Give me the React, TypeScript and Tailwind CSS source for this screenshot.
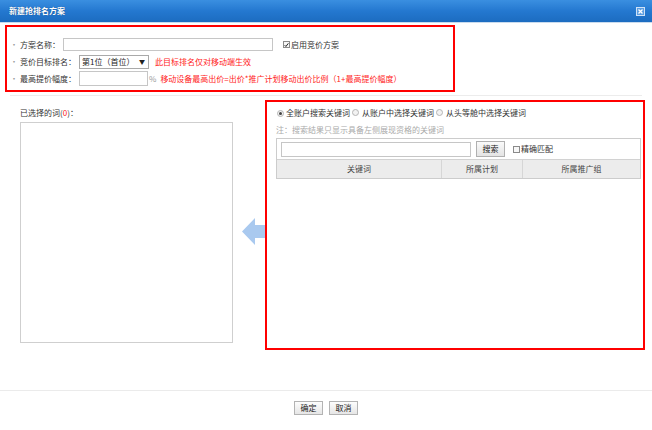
import React from 'react';

function Check({ checked }: { checked?: boolean }) {
  return (
    <span className="inline-flex h-[7px] w-[7px] shrink-0 items-center justify-center border border-[#8a8a8a] bg-[#f7f7f7]">
      {checked && (
        <svg width="6" height="6" viewBox="0 0 6 6">
          <path d="M0.8 3.2 L2.3 4.8 L5.2 1" stroke="#222" strokeWidth="1.2" fill="none" />
        </svg>
      )}
    </span>
  );
}

function Radio({ on }: { on?: boolean }) {
  return (
    <span className="inline-flex h-[7px] w-[7px] shrink-0 items-center justify-center rounded-full border border-[#b5b5b5] bg-[#f2f2f2]">
      {on && <span className="h-[3px] w-[3px] rounded-full bg-[#444]" />}
    </span>
  );
}

export default function App() {
  const rows = [
    { label: '方案名称：' },
    { label: '竞价目标排名：' },
    { label: '最高提价幅度：' },
  ];

  return (
    <div
      className="flex h-[430px] w-[652px] flex-col overflow-hidden bg-white text-[8px] text-[#333]"
      style={{ fontFamily: '"Noto Sans CJK SC", "Liberation Sans", sans-serif' }}
    >
      {/* title bar */}
      <div className="flex h-[22px] items-center justify-between bg-gradient-to-b from-[#3a8fe0] via-[#2478d0] to-[#1c6cc0] pl-[9px] pr-[7px]">
        <span className="text-[8px] font-bold leading-none text-white [text-shadow:0_0_1px_#0b3d7a]">新建抢排名方案</span>
        <span className="flex h-[9px] w-[9px] items-center justify-center border border-[#cfe2f7] bg-[#5c9ee2]">
          <svg width="5" height="5" viewBox="0 0 5 5">
            <path d="M0.5 0.5 L4.5 4.5 M4.5 0.5 L0.5 4.5" stroke="#fff" strokeWidth="1.3" />
          </svg>
        </span>
      </div>
      <div className="h-px bg-[#c9dbee]" />

      {/* top form */}
      <div className="ml-[5px] mt-[2px] h-[67px] w-[450px] border-2 border-[#ff0000] pl-[3px] pt-[9px]">
        <div className="flex h-[17px] items-center">
          <span className="w-[10px] text-[#999]">·</span>
          <span>{rows[0].label}</span>
          <span className="ml-[3px] h-[13px] w-[210px] border border-[#c6c6c6] bg-white" />
          <span className="ml-[10px] flex items-center gap-[1px]">
            <Check checked />
            <span>启用竞价方案</span>
          </span>
        </div>
        <div className="flex h-[17px] items-center">
          <span className="w-[10px] text-[#999]">·</span>
          <span>{rows[1].label}</span>
          <span className="ml-[3px] flex h-[14px] w-[70px] items-center justify-between border border-[#a9a9a9] bg-white pl-[2px] pr-[3px] text-[#222]">
            <span>第1位（首位）</span>
            <span className="text-[6px]">▼</span>
          </span>
          <span className="ml-[6px] text-[#ff1a1a]">此目标排名仅对移动端生效</span>
        </div>
        <div className="flex h-[17px] items-center">
          <span className="w-[10px] text-[#999]">·</span>
          <span>{rows[2].label}</span>
          <span className="ml-[3px] h-[15px] w-[69px] border border-[#c6c6c6] bg-white" />
          <span className="ml-[1px] text-[#999]">%</span>
          <span className="ml-[4px] text-[#ff1a1a]">移动设备最高出价=出价*推广计划移动出价比例（1+最高提价幅度）</span>
        </div>
      </div>

      <div className="mx-[10px] mt-[3px] h-px bg-[#ececec]" />

      {/* main area */}
      <div className="mt-[4px] flex h-[250px] pl-[20px]">
        <div className="flex w-[213px] flex-col pt-[8px]">
          <div className="h-[10px] leading-[10px]">
            已选择的词(<span className="text-[#ff1a1a]">0</span>)：
          </div>
          <div className="mt-[4px] h-[221px] border border-[#cfcfcf] bg-white" />
        </div>

        <div className="ml-[9px] mt-[118px] h-[27px] w-[23px] shrink-0">
          <svg width="23" height="27" viewBox="0 0 23 27">
            <path d="M0 13.5 L13 0 L13 7 L23 7 L23 20 L13 20 L13 27 Z" fill="#a9c9ef" />
          </svg>
        </div>

        <div className="h-[250px] w-[380px] shrink-0 border-2 border-[#ff0000] pl-[9px] pt-[5px]">
          <div className="ml-[1px] flex h-[12px] items-center">
            <Radio on />
            <span className="ml-[2px]">全账户搜索关键词</span>
            <span className="ml-[2px]"><Radio /></span>
            <span className="ml-[3px]">从账户中选择关键词</span>
            <span className="ml-[2px]"><Radio /></span>
            <span className="ml-[3px]">从头等舱中选择关键词</span>
          </div>
          <div className="mt-[6px] h-[10px] leading-[10px] text-[#aaa]">注：搜索结果只显示具备左侧展现资格的关键词</div>
          <div className="mt-[3px] w-[365px] border border-[#cccccc]">
            <div className="flex h-[20px] items-center pl-[4px]">
              <span className="h-[15px] w-[190px] border border-[#c6c6c6] bg-white" />
              <span className="ml-[5px] flex h-[16px] w-[29px] items-center justify-center border border-[#b0b0b0] bg-gradient-to-b from-[#fafafa] to-[#e4e4e4] text-[#222]">
                搜索
              </span>
              <span className="ml-[8px] flex items-center gap-[1px]">
                <Check />
                <span>精确匹配</span>
              </span>
            </div>
            <div className="flex h-[19px] border-t border-[#d2d2d2] bg-[#ececec] text-[#444]">
              <div className="flex w-[164px] items-center justify-center">关键词</div>
              <div className="flex w-[81px] items-center justify-center border-l border-[#d6d6d6]">所属计划</div>
              <div className="flex flex-1 items-center justify-center border-l border-[#d6d6d6]">所属推广组</div>
            </div>
          </div>
        </div>
      </div>

      {/* footer */}
      <div className="mt-[40px] h-px bg-[#ebebeb]" />
      <div className="mt-[10px] flex justify-center gap-[6px]">
        <button className="flex h-[14px] w-[29px] items-center justify-center border border-[#b3b3b3] bg-gradient-to-b from-[#fdfdfd] to-[#e6e6e6] text-[8px] text-[#222]">
          确定
        </button>
        <button className="flex h-[14px] w-[29px] items-center justify-center border border-[#b3b3b3] bg-gradient-to-b from-[#fdfdfd] to-[#e6e6e6] text-[8px] text-[#222]">
          取消
        </button>
      </div>
    </div>
  );
}
